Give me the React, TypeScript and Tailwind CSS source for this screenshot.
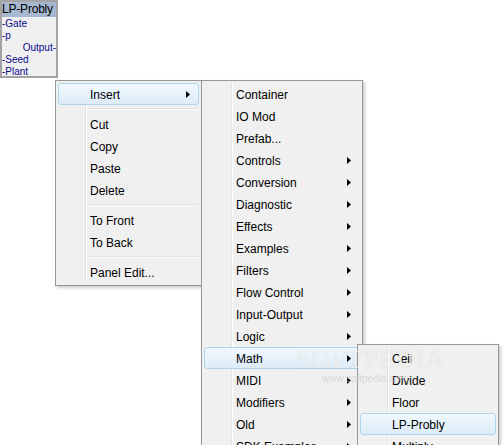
import { Fragment } from 'react'

type Item = { label?: string; sub?: boolean; active?: boolean; sep?: boolean }

const mainItems: Item[] = [
  { label: 'Insert', sub: true, active: true },
  { sep: true },
  { label: 'Cut' },
  { label: 'Copy' },
  { label: 'Paste' },
  { label: 'Delete' },
  { sep: true },
  { label: 'To Front' },
  { label: 'To Back' },
  { sep: true },
  { label: 'Panel Edit...' },
]

const insertItems: Item[] = [
  { label: 'Container' },
  { label: 'IO Mod' },
  { label: 'Prefab...' },
  { label: 'Controls', sub: true },
  { label: 'Conversion', sub: true },
  { label: 'Diagnostic', sub: true },
  { label: 'Effects', sub: true },
  { label: 'Examples', sub: true },
  { label: 'Filters', sub: true },
  { label: 'Flow Control', sub: true },
  { label: 'Input-Output', sub: true },
  { label: 'Logic', sub: true },
  { label: 'Math', sub: true, active: true },
  { label: 'MIDI', sub: true },
  { label: 'Modifiers', sub: true },
  { label: 'Old', sub: true },
  { label: 'SDK Examples', sub: true },
]

const mathItems: Item[] = [
  { label: 'Ceil' },
  { label: 'Divide' },
  { label: 'Floor' },
  { label: 'LP-Probly', active: true },
  { label: 'Multiply' },
]

function Arrow() {
  return (
    <svg width="4" height="7" viewBox="0 0 4 7" className="block mt-px">
      <path d="M0 0 L4 3.5 L0 7 Z" fill="#000" />
    </svg>
  )
}

function Menu({ items, className }: { items: Item[]; className: string }) {
  return (
    <div
      className={`absolute flex flex-col bg-[#f0f0f0] border border-[#979797] p-[2px] shadow-[2px_2px_3px_rgba(0,0,0,0.2)] ${className}`}
    >
      {/* gutter line */}
      <div className="absolute top-[2px] bottom-[2px] left-[29px] w-px bg-[#e2e3e3]" />
      <div className="absolute top-[2px] bottom-[2px] left-[30px] w-px bg-white" />
      {items.map((it, i) => (
        <Fragment key={i}>
          {it.sep ? (
            <div className="h-[8px] flex flex-col justify-center pl-[30px]">
              <div className="h-px bg-[#e0e0e0]" />
              <div className="h-px bg-white" />
            </div>
          ) : (
            <div
              className={`relative h-[22px] flex items-center pl-[31px] pr-[8px] rounded-[3px] border ${
                it.active
                  ? 'border-[#aed6ea] bg-gradient-to-b from-[#f1f8fd] to-[#dcecf8]'
                  : 'border-transparent'
              }`}
            >
              <span className="flex-1 whitespace-nowrap pt-[2px]">{it.label}</span>
              {it.sub && <Arrow />}
            </div>
          )}
        </Fragment>
      ))}
    </div>
  )
}

export default function App() {
  return (
    <div
      className="relative w-[504px] h-[445px] overflow-hidden bg-white text-[12px] text-black"
      style={{ fontFamily: '"Liberation Sans", Arial, sans-serif' }}
    >
      {/* module node */}
      <div className="absolute left-0 top-0 w-[58px] h-[78px] flex flex-col border-2 border-[#a3a3a3] bg-[#f0f0f0] overflow-hidden">
        <div className="h-[15px] bg-[#a6b7cf] text-[12px] leading-[15px] tracking-[-0.2px] whitespace-nowrap">LP-Probly</div>
        <div className="flex flex-col text-[10px] leading-[12px] text-[#0a0a8c] pt-[1px]">
          <div>-Gate</div>
          <div>-p</div>
          <div className="text-right">Output-</div>
          <div>-Seed</div>
          <div>-Plant</div>
        </div>
      </div>

      <Menu items={mainItems} className="left-[55px] top-[80px] w-[147px]" />
      <Menu items={insertItems} className="left-[201px] top-[80px] w-[162px]" />
      <Menu items={mathItems} className="left-[357px] top-[344px] w-[142px]" />

      {/* watermark */}
      <div
        className="absolute left-[296px] top-[340px] text-[26px] tracking-[1px] text-white/60 pointer-events-none"
        style={{ fontFamily: '"Liberation Serif", serif', textShadow: '0 0 1px rgba(190,190,190,0.6)' }}
      >
        SOFTPEDIA
      </div>
      <div className="absolute left-[322px] top-[371px] text-[10px] text-[#c4c4c4]/60 pointer-events-none">
        www.softpedia.com
      </div>
    </div>
  )
}
